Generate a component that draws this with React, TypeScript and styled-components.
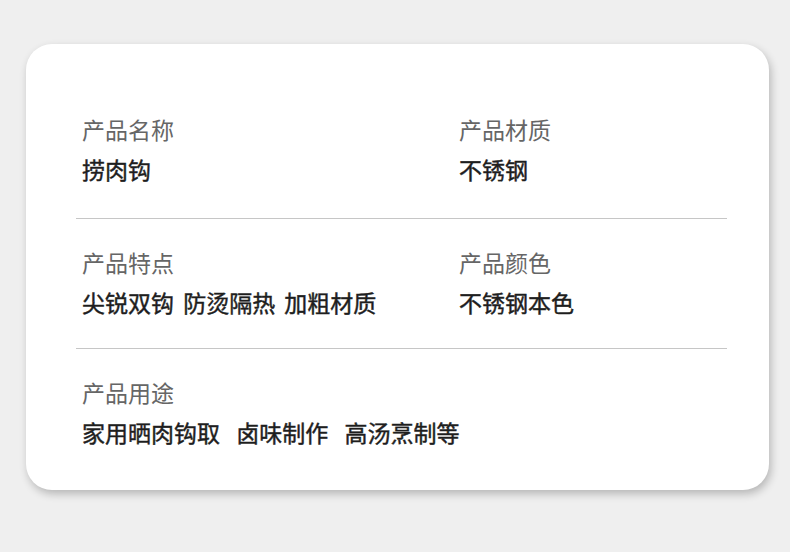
import React from 'react'
import styled, { createGlobalStyle } from 'styled-components'

const rows = [
    [
        { label: '产品名称', value: '捞肉钩' },
        { label: '产品材质', value: '不锈钢' },
    ],
    [
        { label: '产品特点', value: '尖锐双钩 防烫隔热 加粗材质' },
        { label: '产品颜色', value: '不锈钢本色' },
    ],
    [
        { label: '产品用途', value: '家用晒肉钩取  卤味制作  高汤烹制等' },
    ],
]

export default () => {

    return (
        <>
            <GlobalStyle />
            <Page>
                <Card>
                    {rows.map((row, i) => (
                        <Row key={i}>
                            {row.map(cell => (
                                <Cell key={cell.label}>
                                    <Label>{cell.label}</Label>
                                    <Value $spacing={i === 2 ? 3 : 4}>{cell.value}</Value>
                                </Cell>
                            ))}
                        </Row>
                    ))}
                </Card>
            </Page>
        </>
    )
}

// STYLE PROPERTIES
const GlobalStyle = createGlobalStyle`
    html, body {
        margin: 0;
        padding: 0;
        background: #efefef;
        font-family: "Noto Sans CJK SC", "Noto Sans", sans-serif;
    }
`
const Page = styled.div`
    width: 790px;
    height: 552px;
    padding: 44px 21px 0 26px;
    box-sizing: border-box;
`
const Card = styled.div`
    background: #ffffff;
    border-radius: 26px;
    box-shadow: 2px 4px 8px rgba(0, 0, 0, 0.24);
    padding: 40px 42px 43px 50px;
`
const Row = styled.div`
    display: grid;
    grid-template-columns: 377px 1fr;
    padding: 28px 0 31px;
    border-bottom: 1px solid #c6c6c6;

    &:first-child {
        padding-top: 30px;
        padding-bottom: 34px;
    }
    &:last-child {
        border-bottom: none;
        padding-bottom: 0;
    }
`
const Cell = styled.div`
    padding-left: 6px;
`
const Label = styled.div`
    font-size: 23px;
    line-height: 30px;
    color: #666666;
    margin-bottom: 10px;
`
const Value = styled.div<{ $spacing: number }>`
    font-size: 23px;
    line-height: 30px;
    font-weight: 400;
    color: #1e1e1e;
    -webkit-text-stroke: 0.45px #1e1e1e;
    white-space: pre;
    word-spacing: ${p => p.$spacing}px;
`
